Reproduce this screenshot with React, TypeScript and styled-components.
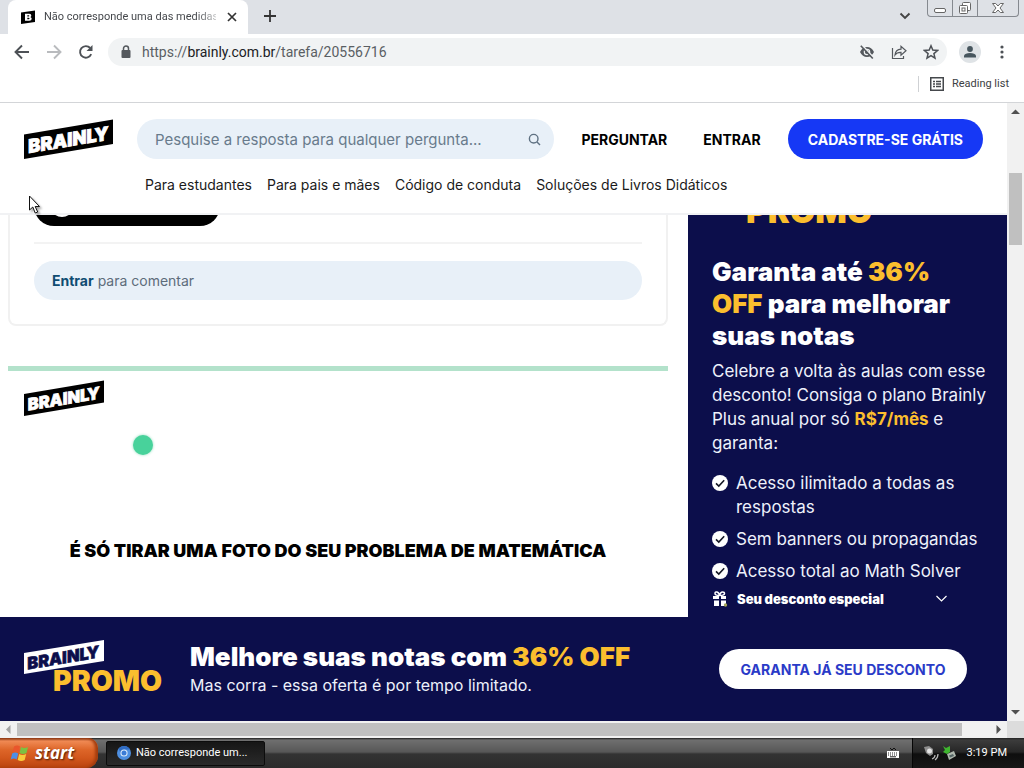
import React from "react";
import styled, { createGlobalStyle, css } from "styled-components";

const ui = `Roboto, "Open Sans", sans-serif`;
const brand = `Inter, "Liberation Sans", sans-serif`;
const navy = "#0c0e4b";
const gold = "#fbbe2e";

const GlobalStyle = createGlobalStyle`
  * { box-sizing: border-box; }
  body { margin: 0; background: #fff; font-family: ${brand}; color: #000; }
  h1, h2, p, ul { margin: 0; padding: 0; }
  ul { list-style: none; }
  a { color: inherit; text-decoration: none; }
  button { font: inherit; color: inherit; margin: 0; padding: 0; border: 0; background: none; cursor: pointer; }
  svg { display: block; flex: none; }
`;

const Desktop = styled.div`
  height: 100vh;
  display: flex;
  flex-direction: column;
  overflow: hidden;
`;

/* Browser frame */
const TabStrip = styled.div`
  flex: none;
  height: 34px;
  display: flex;
  align-items: stretch;
  background: #dee1e6;
  padding-left: 8px;
`;
const Tab = styled.div`
  width: 240px;
  display: flex;
  align-items: center;
  gap: 8px;
  padding: 0 8px 0 12px;
  background: #fff;
  border-radius: 8px 8px 0 0;
  font: 11px/16px ${ui};
  color: #45484c;
`;
const TabTitle = styled.span`
  flex: 1;
  overflow: hidden;
  white-space: nowrap;
  mask-image: linear-gradient(90deg, #000 88%, rgba(0, 0, 0, 0.3));
`;
const IconButton = styled.button<{ $w?: number }>`
  flex: none;
  width: ${(p) => p.$w ?? 32}px;
  height: 32px;
  display: flex;
  align-items: center;
  justify-content: center;
  color: ${(p) => (p.disabled ? "#b9bbbe" : "#4d5156")};
`;
const Spacer = styled.div`
  flex: 1;
`;
const WindowControls = styled.div`
  display: flex;
  height: 17px;
  margin: 0 5px 0 6px;
  border: 1px solid #85898f;
  border-top: 0;
  border-radius: 0 0 4px 4px;
`;
const WindowButton = styled.button<{ $w: number }>`
  width: ${(p) => p.$w}px;
  display: flex;
  align-items: center;
  justify-content: center;
  & + & {
    border-left: 1px solid #85898f;
  }
`;
const Toolbar = styled.div`
  flex: none;
  height: 36px;
  display: flex;
  align-items: center;
  padding: 0 6px;
`;
const AddressBar = styled.div`
  flex: 1;
  height: 28px;
  margin: 0 12px 0 6px;
  padding: 0 0 0 12px;
  border-radius: 14px;
  background: #f1f3f4;
  display: flex;
  align-items: center;
  gap: 10px;
  font: 14px/20px ${ui};
  color: #5a5e63;
`;
const AddressActions = styled.div`
  display: flex;
`;
const Url = styled.a`
  flex: 1;
  strong {
    font-weight: 400;
    color: #202124;
  }
`;
const Avatar = styled.button`
  width: 22px;
  height: 22px;
  border-radius: 50%;
  background: #dfe3e6;
  display: flex;
  align-items: center;
  justify-content: center;
  margin-right: 5px;
`;
const BookmarkBar = styled.div`
  flex: none;
  height: 33px;
  display: flex;
  align-items: center;
  justify-content: flex-end;
  padding: 0 15px 4px 0;
  border-bottom: 1px solid #d3d5d8;
`;
const ReadingList = styled.button`
  display: flex;
  align-items: center;
  gap: 8px;
  height: 16px;
  padding-left: 11px;
  border-left: 1px solid #cfd1d4;
  font: 11px/16px ${ui};
  color: #3c4043;
`;

/* Scrolling area */
const Viewport = styled.div`
  flex: 1;
  min-height: 0;
  display: grid;
  grid-template-columns: minmax(0, 1fr) 17px;
  grid-template-rows: minmax(0, 1fr) 17px;
`;
const ScrollTrack = styled.div<{ $vertical?: boolean }>`
  display: flex;
  flex-direction: ${(p) => (p.$vertical ? "column" : "row")};
  padding: ${(p) => (p.$vertical ? "0 2px" : "2px 0")};
  background: #f1f1f1;
`;
const ScrollArrow = styled.button`
  flex: none;
  min-width: 13px;
  min-height: 13px;
  flex-basis: 17px;
  display: flex;
  align-items: center;
  justify-content: center;
`;
const TrackPart = styled.div<{ $share: number; $thumb?: boolean }>`
  flex: ${(p) => p.$share} 0 0;
  background: ${(p) => (p.$thumb ? "#c0c0c0" : "transparent")};
`;
const Corner = styled.div`
  background: #dcdcdc;
`;
const Page = styled.div`
  display: flex;
  flex-direction: column;
  min-height: 0;
  overflow: hidden;
`;

/* Site header */
const Header = styled.header`
  flex: none;
  padding: 16px 24px 12px;
  border-bottom: 2px solid #f1f2f4;
`;
const HeaderRow = styled.div`
  display: flex;
  align-items: center;
  height: 40px;
`;
const SearchBox = styled.label`
  flex: 1;
  height: 40px;
  margin-left: 24px;
  padding: 0 13px 0 18px;
  border-radius: 20px;
  background: #e8f0f8;
  display: flex;
  align-items: center;
  color: #687b8c;
  input {
    flex: 1;
    min-width: 0;
    padding: 2px 0 0;
    border: 0;
    outline: 0;
    background: none;
    font: 15px/20px ${brand};
    color: #687b8c;
  }
  input::placeholder {
    color: #687b8c;
  }
`;
const HeaderNav = styled.nav`
  display: flex;
  padding: 0 9px;
`;
const HeaderLink = styled.a`
  padding: 2px 18px 0;
  font: 700 14px/38px ${brand};
`;
const pill = css`
  height: 40px;
  border-radius: 20px;
  font: 700 14px/20px ${brand};
  text-align: center;
  white-space: nowrap;
`;
const SignUp = styled.button`
  ${pill}
  padding: 2px 20px 0;
  background: #1638f5;
  color: #fff;
`;
const SubNav = styled.nav`
  display: flex;
  gap: 15px;
  margin-top: 10px;
  padding-left: 121px;
  font: 14px/32px ${brand};
  color: #1b1b1b;
`;

/* Page content */
const Content = styled.main`
  flex: 1;
  min-height: 0;
  overflow: hidden;
  display: grid;
  grid-template-columns: minmax(0, 660px) minmax(0, 319px);
  justify-content: space-between;
  padding-left: 8px;
`;
const Column = styled.div`
  display: flex;
  flex-direction: column;
`;
const AnswerCard = styled.section`
  padding: 0 24px 24px;
  border: 2px solid #f1f1f1;
  border-top: 0;
  border-radius: 0 0 8px 8px;
`;
const CardTop = styled.div`
  height: 11px;
  display: flex;
  align-items: flex-end;
  overflow: hidden;
`;
const DarkPill = styled.div`
  flex: none;
  width: 186px;
  height: 40px;
  padding: 7px 16px;
  border-radius: 20px;
  background: #000;
`;
const PillDot = styled.div`
  width: 24px;
  height: 24px;
  border-radius: 50%;
  background: #fff;
`;
const CommentArea = styled.div`
  margin-top: 16px;
  padding-top: 17px;
  border-top: 2px solid #f3f3f3;
`;
const CommentBox = styled.p`
  height: 39px;
  padding: 0 18px;
  border-radius: 20px;
  background: #e8f0f8;
  font: 14px/39px ${brand};
  color: #5d6c7b;
  a {
    font-weight: 700;
    color: #0f4c72;
  }
`;
const MathBanner = styled.section`
  margin-top: 40px;
  flex: 1;
  padding: 9px 16px 0;
  border-top: 5px solid #b3e2cb;
`;
const Loader = styled.div`
  width: 20px;
  height: 20px;
  margin: 19px 0 0 109px;
  border-radius: 50%;
  background: #48d29b;
  box-shadow: 0 0 3px #8fdcbd;
`;
const MathTitle = styled.h2`
  margin-top: 84px;
  text-align: center;
  font: 900 18px/24px ${brand};
`;
const Aside = styled.aside`
  padding: 0 24px;
  background: ${navy};
  color: #fff;
`;
const PromoPeek = styled.div`
  height: 12px;
  display: flex;
  align-items: flex-end;
  padding-left: 34px;
  overflow: hidden;
  font: 900 33px/32px ${brand};
  color: ${gold};
`;
const AsideTitle = styled.h2`
  margin-top: 29px;
  font: 900 26px/32px ${brand};
  white-space: nowrap;
`;
const Gold = styled.span`
  color: ${gold};
`;
const GoldStrong = styled.strong`
  color: ${gold};
`;
const AsideText = styled.p`
  margin-top: 7px;
  font: 17px/24px ${brand};
  color: #eef1fb;
  white-space: nowrap;
`;
const Benefits = styled.ul`
  margin-top: 16px;
  display: grid;
  gap: 8px;
  font: 17px/24px ${brand};
  color: #eef1fb;
`;
const Benefit = styled.li`
  display: flex;
  align-items: flex-start;
  gap: 8px;
  svg {
    margin-top: 4px;
  }
`;
const OfferToggle = styled.button`
  width: 236px;
  height: 24px;
  margin-top: 4px;
  display: flex;
  align-items: center;
  gap: 9px;
  font: 900 13px/24px ${brand};
  span {
    flex: 1;
    text-align: left;
  }
`;
const Offer = styled.section`
  flex: none;
  height: 104px;
  display: flex;
  align-items: center;
  padding: 0 40px 0 24px;
  background: ${navy};
  color: #fff;
`;
const OfferText = styled.div`
  flex: 1;
  padding-left: 25px;
  h2 {
    font: 900 26px/32px ${brand};
  }
  p {
    font: 16px/24px ${brand};
    color: #eef1fb;
  }
`;
const OfferButton = styled.button`
  ${pill}
  width: 248px;
  padding-top: 2px;
  background: #fff;
  color: #2a3bc8;
`;

/* Taskbar */
const Taskbar = styled.footer`
  flex: none;
  height: 30px;
  display: flex;
  align-items: center;
  background: linear-gradient(#1c1c1c 0, #6f6f6f 2px, #575757 14px, #333 16px, #2c2c2c 100%);
  color: #fff;
  font: 11px/16px ${ui};
`;
const Start = styled.button`
  width: 98px;
  height: 30px;
  display: flex;
  align-items: center;
  gap: 5px;
  padding-left: 10px;
  border-radius: 0 10px 12px 0;
  background: linear-gradient(#7e3417 0, #f08a54 3px, #dd6528 12px, #d2571c 20px, #b9430f 100%);
  box-shadow: inset -3px 0 3px #a23c0d;
  font: italic 700 17px/24px "Open Sans", sans-serif;
  text-shadow: 1px 1px 2px #4b1b05;
`;
const TaskButton = styled.button`
  width: 159px;
  height: 25px;
  margin-left: 8px;
  padding-left: 10px;
  display: flex;
  align-items: center;
  gap: 5px;
  border: 1px solid #0c0c0c;
  border-radius: 2px;
  background: linear-gradient(#161616, #2a2a2a);
`;
const Tray = styled.div`
  height: 30px;
  margin-left: 12px;
  padding: 0 17px 0 10px;
  display: flex;
  align-items: center;
  gap: 3px;
  border-left: 1px solid #050505;
  background: linear-gradient(#222 0, #3c3c3c 2px, #262626 14px, #0e0e0e 16px, #171717 100%);
  time {
    margin-left: 8px;
  }
`;
const Pointer = styled.svg`
  position: absolute;
  left: 28px;
  top: 195px;
  z-index: 2;
  filter: drop-shadow(2px 2px 1px rgba(0, 0, 0, 0.35));
`;

function Logo({ width, fill = "#000", ink = "#fff" }: { width: number; fill?: string; ink?: string }) {
  return (
    <svg width={width} height={Math.round((width * 40) / 89)} viewBox="0 0 89 40" role="img" aria-label="Brainly">
      <path d="M0 15.500 89 0.500V25L0 40Z" fill={fill} />
      <text x="5" y="34" transform="rotate(-9.500 5 34)" fontFamily="Inter, sans-serif" fontWeight="900" fontStyle="italic" fontSize="18.500" fill={ink} stroke={ink} strokeWidth="0.800">
        BRAINLY
      </text>
    </svg>
  );
}

function PromoLogo() {
  return (
    <svg width="141" height="58" viewBox="0 0 141 58" role="img" aria-label="Brainly Promo">
      <path d="M0 13 80 0V21L0 34Z" fill="#fff" />
      <text x="4" y="29.500" transform="rotate(-9.500 4 29.500)" fontFamily="Inter, sans-serif" fontWeight="900" fontStyle="italic" fontSize="16.600" fill={navy} stroke={navy} strokeWidth="0.600">
        BRAINLY
      </text>
      <text x="29" y="51" fontFamily="Inter, sans-serif" fontWeight="900" fontSize="28.500" fill={gold}>
        PROMO
      </text>
    </svg>
  );
}

function Check() {
  return (
    <svg width="16" height="16" viewBox="0 0 16 16" aria-hidden="true">
      <circle cx="8" cy="8" r="8" fill="#fff" />
      <path d="m4 8.300 2.800 2.700 5.400-5.800" fill="none" stroke="#151725" strokeWidth="1.600" />
    </svg>
  );
}

function Triangle({ d, fill = "#505050" }: { d: string; fill?: string }) {
  return (
    <svg width="9" height="9" viewBox="0 0 9 9" aria-hidden="true">
      <path d={d} fill={fill} />
    </svg>
  );
}

const navLinks = ["Para estudantes", "Para pais e mães", "Código de conduta", "Soluções de Livros Didáticos"];

export default function App() {
  return (
    <Desktop>
      <GlobalStyle />
      <TabStrip>
        <Tab>
          <svg width="16" height="16" viewBox="0 0 16 16" aria-hidden="true">
            <path d="M1 3.500 15 1.500V13L1 15Z" fill="#000" />
            <path fillRule="evenodd" d="M5 4.800h4.300q2 0 2 1.600 0 1.200-1 1.600 1.400.400 1.400 1.800 0 1.900-2.400 1.900H5zM7.300 6.200v1.200h1.400q.600 0 .600-.600t-.6-.6zm0 2.600v1.400h1.500q.700 0 .700-.700t-.7-.7z" fill="#fff" />
          </svg>
          <TabTitle>Não corresponde uma das medidas</TabTitle>
          <IconButton $w={16} aria-label="Fechar guia">
            <svg width="10" height="10" viewBox="0 0 10 10"><path d="m1 1 8 8M9 1 1 9" stroke="#333" strokeWidth="1.700" /></svg>
          </IconButton>
        </Tab>
        <IconButton $w={43} aria-label="Nova guia">
          <svg width="12" height="12" viewBox="0 0 12 12"><path d="M6 0v12M0 6h12" stroke="#333" strokeWidth="1.800" /></svg>
        </IconButton>
        <Spacer />
        <IconButton aria-label="Pesquisar guias">
          <svg width="12" height="8" viewBox="0 0 12 8"><path d="m1.500 1.500 4.500 4.500 4.500-4.500" fill="none" stroke="#444" strokeWidth="1.900" /></svg>
        </IconButton>
        <WindowControls>
          <WindowButton $w={24} aria-label="Minimizar">
            <svg width="14" height="14" viewBox="0 0 14 14"><rect x="1.500" y="7.500" width="11" height="4" rx="1.500" fill="#fff" stroke="#666" /></svg>
          </WindowButton>
          <WindowButton $w={25} aria-label="Restaurar">
            <svg width="14" height="14" viewBox="0 0 14 14" fill="#fff" stroke="#666"><rect x="4.500" y="1.500" width="8" height="8" rx="1" /><rect x="1.500" y="4.500" width="8" height="8" rx="1" /><rect x="4" y="7" width="3" height="3" /></svg>
          </WindowButton>
          <WindowButton $w={41} aria-label="Fechar">
            <svg width="14" height="14" viewBox="0 0 14 14"><path d="M1.500 2.500h3.200L7 5l2.300-2.500h3.200L9 7l3.500 4.500H9.300L7 9l-2.300 2.500H1.500L5 7z" fill="#fff" stroke="#666" /></svg>
          </WindowButton>
        </WindowControls>
      </TabStrip>

      <Toolbar>
        <IconButton aria-label="Voltar">
          <svg width="16" height="16" viewBox="0 0 16 16" fill="none" stroke="currentColor" strokeWidth="1.900"><path d="M15 8H2M8 1.500 1.500 8 8 14.500" /></svg>
        </IconButton>
        <IconButton disabled aria-label="Avançar">
          <svg width="16" height="16" viewBox="0 0 16 16" fill="none" stroke="currentColor" strokeWidth="1.900"><path d="M1 8h13M8 1.500 14.500 8 8 14.500" /></svg>
        </IconButton>
        <IconButton aria-label="Recarregar">
          <svg width="16" height="16" viewBox="0 0 16 16"><path d="M13.200 10.200A5.800 5.800 0 1 1 12.200 4" fill="none" stroke="currentColor" strokeWidth="1.900" /><path d="M14.500 1v6H8.500z" fill="currentColor" /></svg>
        </IconButton>
        <AddressBar>
          <svg width="12" height="14" viewBox="0 0 12 14"><rect x="1.500" y="5" width="9" height="8" rx="1" fill="#54585d" /><path d="M3.500 6V3.500a2.500 2.500 0 0 1 5 0V6" fill="none" stroke="#54585d" strokeWidth="1.500" /></svg>
          <Url href="#">https://<strong>brainly.com.br</strong>/tarefa/20556716</Url>
          <AddressActions>
            <IconButton aria-label="Cookies bloqueados">
              <svg width="16" height="16" viewBox="0 0 16 16"><path d="M1 8q2.500-5 7-5t7 5q-2.500 5-7 5T1 8Z" fill="#54585d" /><circle cx="8" cy="8" r="2.700" fill="none" stroke="#f1f3f4" strokeWidth="1.200" /><path d="m3 1 12 13" stroke="#f1f3f4" strokeWidth="1.600" /><path d="m1.800 1.800 12 12.700" stroke="#54585d" strokeWidth="1.600" /></svg>
            </IconButton>
            <IconButton aria-label="Compartilhar">
              <svg width="16" height="16" viewBox="0 0 16 16" fill="none" stroke="#54585d" strokeWidth="1.200"><path d="M1.500 4v10.500h11V12" /><path d="M4 11q.500-5.500 6-5.800V2.300L15 6.800l-5 4.400V8.400Q6 8.200 4 11Z" /></svg>
            </IconButton>
            <IconButton aria-label="Favoritar">
              <svg width="16" height="16" viewBox="0 0 16 16"><path d="m8 1.800 1.800 4.300 4.700.400-3.600 3.100 1.100 4.600L8 11.700l-4 2.500 1.100-4.600-3.600-3.100 4.700-.400z" fill="none" stroke="#4d5156" strokeWidth="1.500" /></svg>
            </IconButton>
          </AddressActions>
        </AddressBar>
        <Avatar aria-label="Perfil">
          <svg width="12" height="12" viewBox="0 0 12 12" fill="#47565e"><circle cx="6" cy="3" r="2.900" /><path d="M0 11.500V9.600Q1 7 6 7t6 2.600v1.900z" /></svg>
        </Avatar>
        <IconButton aria-label="Menu">
          <svg width="4" height="14" viewBox="0 0 4 14" fill="#4d5156"><circle cx="2" cy="2" r="1.600" /><circle cx="2" cy="7" r="1.600" /><circle cx="2" cy="12" r="1.600" /></svg>
        </IconButton>
      </Toolbar>

      <BookmarkBar>
        <ReadingList>
          <svg width="14" height="14" viewBox="0 0 14 14" fill="none" stroke="#45484c" strokeWidth="1.500"><path d="M.75.75h12.500v12.500H.75zM3 4.500h2M3 7h2M3 9.500h2M6 4.500h5M6 7h5M6 9.500h5" /></svg>
          Reading list
        </ReadingList>
      </BookmarkBar>

      <Viewport>
        <Page>
          <Header>
            <HeaderRow>
              <a href="#"><Logo width={89} /></a>
              <SearchBox>
                <input type="text" aria-label="Pesquisar" placeholder="Pesquise a resposta para qualquer pergunta..." />
                <svg width="13" height="13" viewBox="0 0 13 13" fill="none" stroke="#5f7182" strokeWidth="1.400"><circle cx="5.700" cy="5.700" r="4.300" /><path d="m9 9 3 3" /></svg>
              </SearchBox>
              <HeaderNav>
                <HeaderLink href="#">PERGUNTAR</HeaderLink>
                <HeaderLink href="#">ENTRAR</HeaderLink>
              </HeaderNav>
              <SignUp>CADASTRE-SE GRÁTIS</SignUp>
            </HeaderRow>
            <SubNav>
              {navLinks.map((label) => (
                <a key={label} href="#">{label}</a>
              ))}
            </SubNav>
          </Header>

          <Content>
            <Column>
              <AnswerCard>
                <CardTop>
                  <DarkPill><PillDot /></DarkPill>
                </CardTop>
                <CommentArea>
                  <CommentBox><a href="#">Entrar</a> para comentar</CommentBox>
                </CommentArea>
              </AnswerCard>
              <MathBanner>
                <Logo width={80} />
                <Loader />
                <MathTitle>É SÓ TIRAR UMA FOTO DO SEU PROBLEMA DE MATEMÁTICA</MathTitle>
              </MathBanner>
            </Column>
            <Aside>
              <PromoPeek>PROMO</PromoPeek>
              <AsideTitle>
                Garanta até <Gold>36%<br />OFF</Gold> para melhorar<br />suas notas
              </AsideTitle>
              <AsideText>
                Celebre a volta às aulas com esse<br />desconto! Consiga o plano Brainly<br />Plus anual por só <GoldStrong>R$7/mês</GoldStrong> e<br />garanta:
              </AsideText>
              <Benefits>
                <Benefit><Check /><span>Acesso ilimitado a todas as<br />respostas</span></Benefit>
                <Benefit><Check />Sem banners ou propagandas</Benefit>
                <Benefit><Check />Acesso total ao Math Solver</Benefit>
              </Benefits>
              <OfferToggle>
                <svg width="16" height="16" viewBox="0 0 16 16"><path d="M1 5h6v3H1zM9 5h5v3H9zM2 9.500h5V15H2zM9 9.500h5V15H9z" fill="#fff" /><path d="M7.500 4.500Q3 4.500 3 2.500T5 1q2 .5 2.500 3.500Q8.500 1 10.500 1t2 1.500q0 2-5 2Z" fill="none" stroke="#fff" strokeWidth="1.500" /><circle cx="13.500" cy="14" r="1.700" fill="#a6a65c" /></svg>
                <span>Seu desconto especial</span>
                <svg width="13" height="8" viewBox="0 0 13 8"><path d="m1.500 1 5 5 5-5" fill="none" stroke="#fff" strokeWidth="1.200" /></svg>
              </OfferToggle>
            </Aside>
          </Content>

          <Offer>
            <PromoLogo />
            <OfferText>
              <h2>Melhore suas notas com <Gold>36% OFF</Gold></h2>
              <p>Mas corra - essa oferta é por tempo limitado.</p>
            </OfferText>
            <OfferButton>GARANTA JÁ SEU DESCONTO</OfferButton>
          </Offer>
        </Page>

        <ScrollTrack $vertical>
          <ScrollArrow aria-label="Rolar para cima"><Triangle d="M0 7 4.500 2.500 9 7z" /></ScrollArrow>
          <TrackPart $share={53} />
          <TrackPart $share={72} $thumb />
          <TrackPart $share={459} />
          <ScrollArrow aria-label="Rolar para baixo"><Triangle d="M0 2 4.500 6.500 9 2z" /></ScrollArrow>
        </ScrollTrack>
        <ScrollTrack>
          <ScrollArrow aria-label="Rolar para a esquerda"><Triangle d="M6.500 0 2 4.500 6.500 9z" fill="#a3a3a3" /></ScrollArrow>
          <TrackPart $share={945} $thumb />
          <TrackPart $share={28} />
          <ScrollArrow aria-label="Rolar para a direita"><Triangle d="M2.500 0 7 4.500 2.500 9z" /></ScrollArrow>
        </ScrollTrack>
        <Corner />
      </Viewport>

      <Taskbar>
        <Start>
          <svg width="20" height="18" viewBox="0 0 20 18" aria-hidden="true">
            <path d="M4 2.500Q7 .5 10 2.500L8.500 8.500Q5.500 6.500 2.500 8.500Z" fill="#e9562c" />
            <path d="M11 3Q14 5 18 3L16.500 9Q13 11 9.500 9Z" fill="#7cc142" />
            <path d="M2.200 9.500Q5.200 7.500 8.200 9.500L6.700 15.500Q3.700 13.500.7 15.500Z" fill="#4c8fe6" />
            <path d="M9.200 10Q12.700 12 16.200 10L14.700 16Q11.200 18 7.700 16Z" fill="#f8ca3b" />
          </svg>
          start
        </Start>
        <TaskButton>
          <svg width="14" height="14" viewBox="0 0 14 14" aria-hidden="true"><circle cx="7" cy="7" r="7" fill="#4e8fe0" /><path d="M7 3.500h6A7 7 0 0 0 1.500 2.700L4 8z" fill="#2f6cc4" /><circle cx="7" cy="7" r="3.600" fill="#dcebfb" /><circle cx="7" cy="7" r="2.500" fill="#3b7bd6" /></svg>
          Não corresponde um...
        </TaskButton>
        <Spacer />
        <svg width="14" height="14" viewBox="0 0 14 14" aria-hidden="true"><path d="M4 2l2 2 2-2 2 2" fill="none" stroke="#111" /><rect x="1" y="5" width="12" height="7" fill="#fff" /><path d="M2 7h10M2 9h10" stroke="#222" strokeDasharray="1 1" /><path d="M4 10.800h6" stroke="#222" /></svg>
        <Tray>
          <svg width="16" height="16" viewBox="0 0 16 16" aria-hidden="true"><path d="M1 2l5-1 4 3v5l-3 2-4-3z" fill="#8d8d8d" /><circle cx="6.500" cy="6" r="2.500" fill="#e4e4e4" /><path d="M9 14q3-1 3-4M12 15q3-2 3-6" fill="none" stroke="#bbb" strokeWidth="1.200" /></svg>
          <svg width="14" height="16" viewBox="0 0 14 16" aria-hidden="true"><path d="M5 9l7-3 2 5-7 4z" fill="#aeb7ad" /><path d="M7 10.500l4-1.500 1 2-4 1.500z" fill="#566" /><path d="M1 1l3 2 4-2v6l-3 2-4-2 2-2z" fill="#3fb52f" /></svg>
          <time>3:19 PM</time>
        </Tray>
      </Taskbar>

      <Pointer width="14" height="20" viewBox="0 0 14 20" aria-hidden="true">
        <path d="M1.500 1v14l3.300-3 2.400 6 2.500-1-2.500-5.500h4.300z" fill="#fff" stroke="#111" />
      </Pointer>
    </Desktop>
  );
}
